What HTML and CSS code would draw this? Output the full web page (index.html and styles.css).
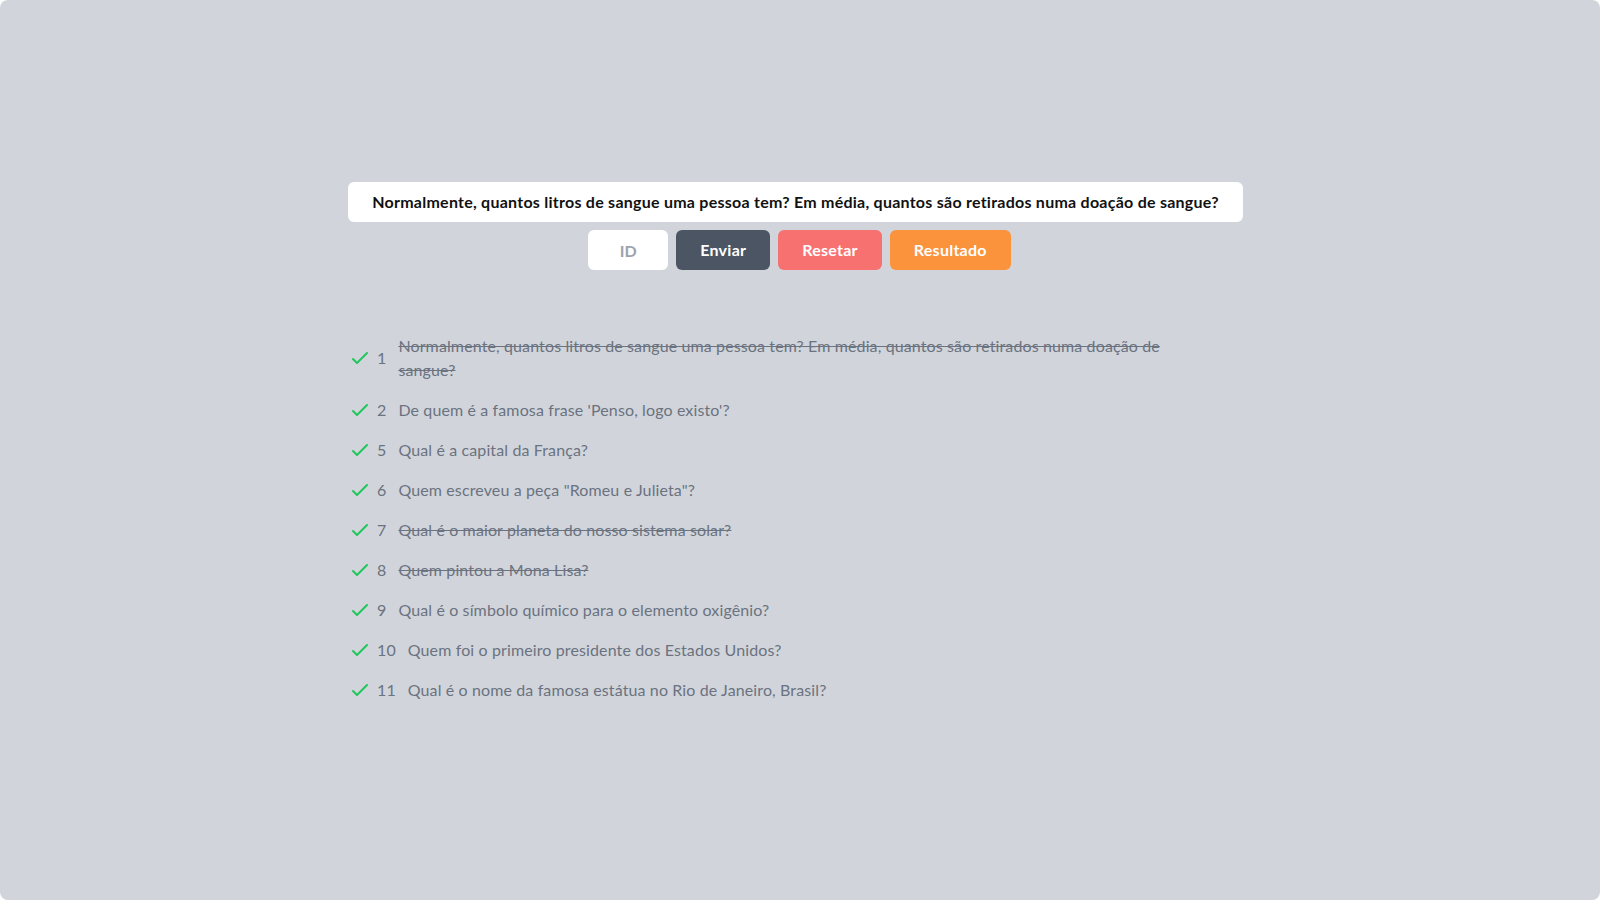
FILE: index.html
```html
<!DOCTYPE html>
<html lang="pt">
<head>
<meta charset="utf-8">
<title>Perguntas</title>
<link rel="stylesheet" href="styles.css">
</head>
<body>
<div class="page">
  <div class="column">
    <div class="question">Normalmente, quantos litros de sangue uma pessoa tem? Em média, quantos são retirados numa doação de sangue?</div>
    <div class="controls">
      <input class="id-input" type="text" placeholder="ID">
      <button class="btn btn-send">Enviar</button>
      <button class="btn btn-reset">Resetar</button>
      <button class="btn btn-result">Resultado</button>
    </div>
    <ul class="list">
      <li class="item"><svg class="check" viewBox="0 0 24 24"><path d="M5 13l4 4L19 7"/></svg><span class="num">1</span><span class="text done">Normalmente, quantos litros de sangue uma pessoa tem? Em média, quantos são retirados numa doação de sangue?</span></li>
      <li class="item"><svg class="check" viewBox="0 0 24 24"><path d="M5 13l4 4L19 7"/></svg><span class="num">2</span><span class="text">De quem é a famosa frase 'Penso, logo existo'?</span></li>
      <li class="item"><svg class="check" viewBox="0 0 24 24"><path d="M5 13l4 4L19 7"/></svg><span class="num">5</span><span class="text">Qual é a capital da França?</span></li>
      <li class="item"><svg class="check" viewBox="0 0 24 24"><path d="M5 13l4 4L19 7"/></svg><span class="num">6</span><span class="text">Quem escreveu a peça "Romeu e Julieta"?</span></li>
      <li class="item"><svg class="check" viewBox="0 0 24 24"><path d="M5 13l4 4L19 7"/></svg><span class="num">7</span><span class="text done">Qual é o maior planeta do nosso sistema solar?</span></li>
      <li class="item"><svg class="check" viewBox="0 0 24 24"><path d="M5 13l4 4L19 7"/></svg><span class="num">8</span><span class="text done">Quem pintou a Mona Lisa?</span></li>
      <li class="item"><svg class="check" viewBox="0 0 24 24"><path d="M5 13l4 4L19 7"/></svg><span class="num">9</span><span class="text">Qual é o símbolo químico para o elemento oxigênio?</span></li>
      <li class="item"><svg class="check" viewBox="0 0 24 24"><path d="M5 13l4 4L19 7"/></svg><span class="num">10</span><span class="text">Quem foi o primeiro presidente dos Estados Unidos?</span></li>
      <li class="item"><svg class="check" viewBox="0 0 24 24"><path d="M5 13l4 4L19 7"/></svg><span class="num">11</span><span class="text">Qual é o nome da famosa estátua no Rio de Janeiro, Brasil?</span></li>
    </ul>
  </div>
</div>
</body>
</html>
```

FILE: styles.css
```css
html, body {
  margin: 0;
  padding: 0;
  background: #ffffff;
}
body {
  font-family: Lato, "Noto Sans", sans-serif;
  font-size: 16px;
  line-height: 24px;
}
.page {
  width: 1600px;
  height: 900px;
  box-sizing: border-box;
  background: #d1d5db;
  border-radius: 8px;
  padding: 182px 9px 0 0;
  display: flex;
  justify-content: center;
}
.column {
  width: 895px;
  display: flex;
  flex-direction: column;
  align-items: center;
}
.question {
  width: 100%;
  box-sizing: border-box;
  background: #ffffff;
  border-radius: 6px;
  padding: 8px 16px 8px;
  text-align: center;
  font-weight: 700;
  letter-spacing: 0.25px;
  color: #111111;
}
.controls {
  display: flex;
  gap: 8px;
  margin-top: 8px;
  padding-left: 8px;
}
.id-input {
  width: 80px;
  height: 40px;
  box-sizing: border-box;
  border: none;
  border-radius: 6px;
  background: #ffffff;
  font: inherit;
  font-weight: 700;
  text-align: center;
  outline: none;
  padding: 0 8px;
}
.id-input::placeholder {
  color: #9ca3af;
}
.btn {
  height: 40px;
  border: none;
  border-radius: 6px;
  font: inherit;
  font-weight: 700;
  letter-spacing: 0.25px;
  color: #ffffff;
  padding: 0 24px;
}
.btn-send { background: #4b5563; }
.btn-reset { background: #f87171; }
.btn-result { background: #fb923c; }
.list {
  list-style: none;
  margin: 64px 0 0 0;
  padding: 0;
  width: 100%;
  display: flex;
  flex-direction: column;
  gap: 16px;
  color: #6b7280;
}
.item {
  display: flex;
  align-items: center;
  max-width: 845px;
}
.check {
  width: 24px;
  height: 24px;
  margin-left: 0;
  flex: none;
  fill: none;
  stroke: #22c55e;
  stroke-width: 2;
  stroke-linecap: round;
  stroke-linejoin: round;
}
.num {
  margin-left: 5px;
  flex: none;
  letter-spacing: 0.1px;
}
.text {
  margin-left: 12px;
  letter-spacing: 0.12px;
}
.done {
  text-decoration: line-through;
}
```
